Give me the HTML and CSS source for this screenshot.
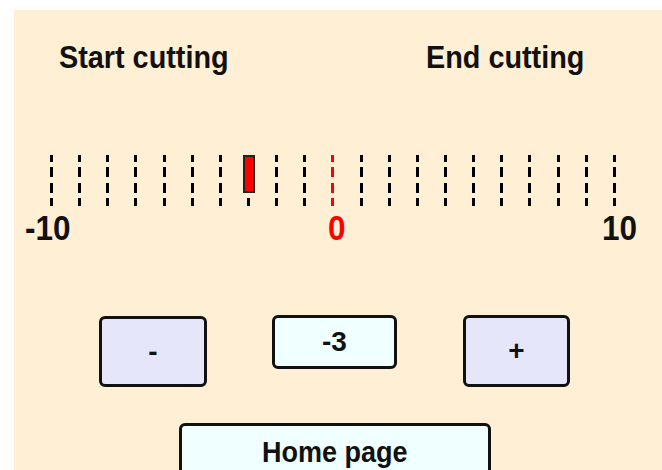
FILE: index.html
```html
<!DOCTYPE html>
<html lang="en">
<head>
    <meta charset="UTF-8">
    <meta name="viewport" content="width=device-width, initial-scale=1.0">
    <title>Cutting</title>
    <link rel="stylesheet" href="styles.css">
</head>
<body>

    <div class="panel">
        <div class="titles">
            <span class="title start"><span class="narrow">Start cutting</span></span>
            <span class="title"><span class="narrow">End cutting</span></span>
        </div>

        <div class="scale">
            <div class="ticks">
                <i class="tick"></i>
                <i class="tick"></i>
                <i class="tick"></i>
                <i class="tick"></i>
                <i class="tick"></i>
                <i class="tick"></i>
                <i class="tick"></i>
                <i class="tick"></i>
                <i class="tick"></i>
                <i class="tick"></i>
                <i class="tick zero"></i>
                <i class="tick"></i>
                <i class="tick"></i>
                <i class="tick"></i>
                <i class="tick"></i>
                <i class="tick"></i>
                <i class="tick"></i>
                <i class="tick"></i>
                <i class="tick"></i>
                <i class="tick"></i>
                <i class="tick"></i>
            </div>
            <div class="marker"></div>
        </div>

        <div class="labels">
            <span class="narrow left">-10</span>
            <span class="narrow mid red">0</span>
            <span class="narrow right">10</span>
        </div>

        <div class="controls">
            <button class="btn minus">-</button>
            <div class="value">-3</div>
            <button class="btn plus">+</button>
        </div>

        <button class="home"><span class="narrow mid">Home page</span></button>
    </div>

</body>
</html>
```

FILE: styles.css
```css
body {
    margin: 0;
    background: #fff;
    font-family: "Liberation Sans", Arial, sans-serif;
    font-weight: bold;
    color: #111;
    height: 470px;
    overflow: hidden;
}

.panel {
    margin: 10px 0 0 14px;
    height: 460px;
    background: #ffefd5;
    padding-top: 29px;
    box-sizing: border-box;
}

/* condensed look of the panel font */
.narrow {
    display: inline-block;
    transform: scaleX(0.9);
    transform-origin: left center;
}

.narrow.mid {
    transform-origin: center center;
}

.narrow.right {
    transform-origin: right center;
}

.titles {
    display: flex;
    padding-left: 45px;
    font-size: 32px;
    line-height: 36px;
}

.title.start {
    width: 367px;
}

.scale {
    position: relative;
    margin: 80px 0 0 36px;
    width: 566px;
    height: 51px;
}

.ticks {
    display: flex;
    justify-content: space-between;
    height: 100%;
}

.tick {
    width: 3px;
    height: 100%;
    background: repeating-linear-gradient(to bottom, #000 0, #000 10px, transparent 10px, transparent 15.3px);
    background-position: 0 -3px;
}

.tick.zero {
    background: repeating-linear-gradient(to bottom, #f00 0, #f00 10px, transparent 10px, transparent 15.3px);
    background-position: 0 -3px;
}

.marker {
    position: absolute;
    left: 193px;
    top: 0;
    width: 8px;
    height: 34px;
    background: #f00;
    border: 2px solid #222;
}

.labels {
    display: flex;
    justify-content: space-between;
    margin: 2px 0 0 11px;
    width: 612px;
    font-size: 35px;
    line-height: 40px;
}

.red {
    color: #f00;
}

.controls {
    display: flex;
    align-items: flex-start;
    margin: 67px 0 0 85px;
}

.btn, .value, .home {
    font-family: inherit;
    font-weight: bold;
    color: #111;
    border: 3px solid #111;
    border-radius: 6px;
    box-sizing: border-box;
    padding: 0;
    display: flex;
    justify-content: center;
    align-items: center;
}

.btn {
    background: #e6e6fa;
    font-size: 28px;
}

.btn.minus {
    width: 108px;
    height: 71px;
    margin-top: 1px;
}

.btn.plus {
    width: 107px;
    height: 72px;
    margin-left: 66px;
}

.value {
    width: 125px;
    height: 54px;
    margin-left: 65px;
    background: #f0ffff;
    font-size: 28px;
}

.home {
    margin: 36px 0 0 165px;
    width: 312px;
    height: 70px;
    align-items: flex-start;
    padding-top: 9px;
    background: #f0ffff;
    font-size: 30px;
    line-height: 34px;
}
```
